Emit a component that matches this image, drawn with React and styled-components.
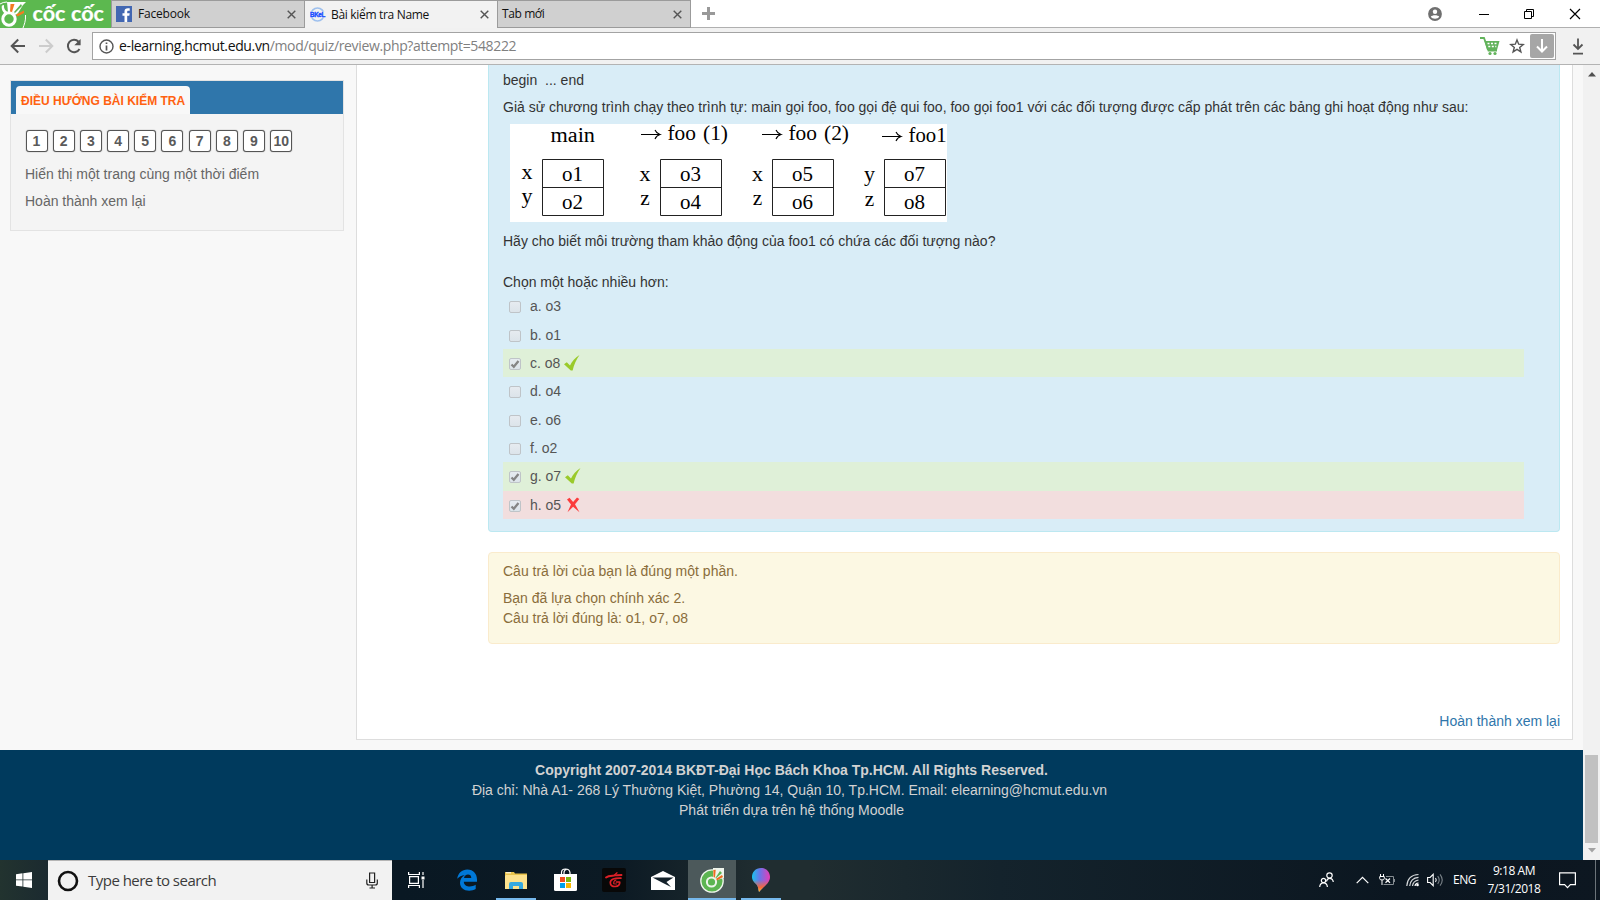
import React from "react";
import styled, { createGlobalStyle } from "styled-components";

const GlobalStyle = createGlobalStyle`
  * { box-sizing: border-box; }
  body { margin: 0; overflow: hidden; font-family: "Liberation Sans", Arial, sans-serif; }
  svg { display: block; flex: none; }
`;

const uiFont = `"Open Sans", "Noto Sans", sans-serif`;

const Screen = styled.div`
  width: 1600px; height: 900px; display: flex; flex-direction: column; overflow: hidden; background: #f8f8f8;
`;

/* ---------- browser chrome ---------- */
const TabStrip = styled.div`
  height: 28px; flex: none; display: flex; background: #fff; border-bottom: 1px solid #b0b0b0;
`;
const Brand = styled.div`
  width: 111px; height: 28px; background: #5cb84f; flex: none; overflow: hidden;
`;
const Tab = styled.div`
  width: ${(p) => p.$w}px; height: 28px; flex: none; display: flex; align-items: center;
  padding: 0 8px 0 ${(p) => p.$pad}px;
  background: ${(p) => (p.$active ? "#f2f2f2" : "#d0d0d0")};
  border: solid #9b9b9b; border-width: 1px 0 ${(p) => (p.$active ? 0 : 1)}px 1px;
  &:nth-child(4) { border-right-width: 1px; }
  font: 12px/16px ${uiFont}; color: #111; letter-spacing: ${(p) => p.$ls}px;
`;
const TabTitle = styled.span`
  flex: 1; white-space: nowrap; margin-left: ${(p) => p.$gap}px;
`;
const NewTab = styled.div`
  width: 34px; display: flex; align-items: center; justify-content: center;
`;
const WindowButtons = styled.div`
  margin-left: auto; display: flex; align-items: center; height: 27px; gap: 25px; padding-right: 19px;
  svg:first-child { margin-right: 4px; }
`;
const Toolbar = styled.div`
  height: 37px; flex: none; display: flex; align-items: center; background: #f1f1f1;
  border-bottom: 1px solid #b3b3b3; padding: 0 11px 0 10px;
`;
const NavButtons = styled.div`
  width: 82px; display: flex; align-items: center; gap: 12px;
`;
const AddressBar = styled.div`
  width: 1464px; height: 28px; background: #fff; border: 1px solid #a3a3a3; display: flex; align-items: center;
  padding: 0 1px 0 6px; font: 14px/20px ${uiFont}; letter-spacing: -0.36px; color: #111;
`;
const Url = styled.span`
  flex: 1; margin-left: 5px; white-space: nowrap; color: #808080;
  b { font-weight: 400; color: #111; }
`;
const DownloadBadge = styled.div`
  width: 24px; height: 24px; border-radius: 2px; background: #a6a6a6; display: flex; align-items: center; justify-content: center;
  margin-left: 5px;
`;
const DownloadButton = styled.div`
  margin-left: 14px;
`;

/* ---------- page ---------- */
const Viewport = styled.div`
  flex: 1; min-height: 0; display: flex;
`;
const Page = styled.div`
  width: 1583px; display: flex; flex-direction: column;
`;
const Columns = styled.div`
  height: 685px; display: flex; align-items: flex-start; padding-left: 10px; gap: 12px;
`;
const NavBlock = styled.aside`
  width: 334px; height: 151px; margin-top: 15px; border: 1px solid #e3e3e3; background: #f4f4f4;
`;
const NavHeader = styled.div`
  height: 33px; background: #2f76ab; padding: 5px 0 0 5px;
`;
const NavTitle = styled.div`
  width: 174px; height: 28px; background: #f8f8f8; border-radius: 4px 4px 0 0; padding-left: 5px;
  font-size: 12px; font-weight: 700; line-height: 31px; color: #ff6210; white-space: nowrap;
`;
const NavBody = styled.div`
  padding: 16px 14px 0;
`;
const QuestionNumbers = styled.div`
  display: flex; gap: 5.2px; margin: 0 0 12px 0.5px;
`;
const QuestionNumber = styled.div`
  width: 22px; height: 22px; border: 1px solid #555; border-radius: 3px; background: #fff;
  box-shadow: 0 0 1px #555; font: 700 14px/20px "Liberation Sans", Arial, sans-serif; text-align: center; color: #5a5a5a;
`;
const NavLink = styled.div`
  font-size: 14px; line-height: 20px; margin-bottom: 7px; color: #666;
`;
const Main = styled.main`
  width: 1217px; height: 675px; background: #fff; border: 1px solid #ddd; border-top: 0; padding: 0 12px 0 131px;
`;
const Question = styled.section`
  height: 467px; background: #d9edf7; border: 1px solid #bce8f1; border-top: 0; border-radius: 0 0 4px 4px;
  padding: 5px 35px 0 14px; margin-bottom: 20px;
  font-size: 14px; line-height: 20px; color: #333;
`;
const Paragraph = styled.p`
  margin: 0 0 ${(p) => p.$after}px; white-space: pre;
`;
const Figure = styled.div`
  width: 437px; height: 98px; margin: 0 0 9px 7px; background: #fff;
`;
const optionColors = { correct: "#dff0d8", wrong: "#f2dede" };
const Option = styled.div`
  width: 1021px; height: 28.33px; padding: 0 0 0.6px 6px; display: flex; align-items: center;
  background: ${(p) => optionColors[p.$state] || "transparent"}; color: #555;
`;
const Checkbox = styled.span`
  width: 12px; height: 12px; border: 1px solid #bfc4c8; border-radius: 2px; margin: 2px 9px 0 0;
  background: linear-gradient(#e6ebf0, #dce4ea);
`;
const Mark = styled.span`
  margin-left: 4px;
`;
const Feedback = styled.section`
  height: 92px; background: #fcf8e3; border: 1px solid #faebcc; border-radius: 4px; padding: 8px 14px;
  font-size: 14px; line-height: 20px; color: #8a6d3b;
`;
const FinishLink = styled.div`
  margin-top: 67px; text-align: right; font-size: 14px; line-height: 20px; color: #2f76ab;
`;
const Footer = styled.footer`
  height: 110px; background: #003a5d; color: #d2d2d2; text-align: center; font-size: 14px; line-height: 20px; padding-top: 10px;
`;
const FooterLine = styled.div`
  padding-right: ${(p) => p.$trail || 0}px;
`;
const Scrollbar = styled.div`
  width: 17px; background: #f1f1f1; display: flex; flex-direction: column; align-items: center; padding: 7px 0 7px;
`;
const Thumb = styled.div`
  width: 13px; height: 88px; background: #c1c1c1; margin: auto 0 5px;
`;

/* ---------- taskbar ---------- */
const Taskbar = styled.div`
  height: 40px; flex: none; display: flex; align-items: stretch; color: #fff;
  background: linear-gradient(90deg, #22332f 0, #1b2a30 48px, #091823 400px, #0c1a24 620px, #202d30 760px, #202d30 810px, #14232c 1000px, #0b1620 1400px, #0d1721 1600px);
`;
const TaskButton = styled.div`
  width: 48px; height: 40px; flex: none; display: flex; align-items: center; justify-content: center;
  margin-right: ${(p) => p.$after ?? 1}px;
  background-color: ${(p) => (p.$current ? "#4c595b" : "transparent")};
  background-image: ${(p) => (p.$line ? "linear-gradient(#76b9ed, #76b9ed)" : "none")};
  background-repeat: no-repeat; background-position: ${(p) => (p.$line === 48 ? 0 : 4)}px 38px;
  background-size: ${(p) => p.$line || 0}px 2px;
`;
const SearchBox = styled.div`
  width: 344px; background: #f2f2f2; border-top: 1px solid #b5b5b5; display: flex; align-items: center; padding: 0 14px 0 9px;
  font: 15px/20px ${uiFont}; letter-spacing: -0.52px; color: #3b3b3b;
`;
const SearchText = styled.span`
  flex: 1; margin-left: 9px; padding-bottom: 1px;
`;
const Tray = styled.div`
  margin-left: auto; width: 281px; display: flex; align-items: center; font: 12px/18px ${uiFont};
`;
const Language = styled.span`
  margin-left: 10px; width: 33px; letter-spacing: -0.5px;
`;
const Clock = styled.div`
  width: 56px; text-align: center; letter-spacing: -0.45px; white-space: nowrap;
`;
const TrayIcon = styled.div`
  margin-left: ${(p) => p.$before}px;
`;
const ShowDesktop = styled.div`
  margin-left: auto; width: 5px; height: 40px; border-left: 1px solid #6b7379;
`;

/* ---------- drawings ---------- */
const CloseX = () => (
  <svg width="9" height="9" viewBox="0 0 9 9"><path d="M.7.7l7.6 7.6M8.3.7L.7 8.3" stroke="#555" strokeWidth="1.4" /></svg>
);

const BrandArt = () => (
  <svg width="111" height="28" viewBox="0 0 111 28">
    <path d="M0 4Q3 2 7 2M25.500 15C26 21 24 25 23 28" fill="none" stroke="#fff" strokeWidth="1" />
    <circle cx="9" cy="19" r="6.200" fill="none" stroke="#fff" strokeWidth="3" />
    <path d="M2 5.500C1 8 2.500 12 5 13.500L8 12.500C5 11 3.500 8 4 5z" fill="#fff" />
    <path d="M7 2H26L23 5 18 13 16 15 12 12 8 12z" fill="#fff" />
    <path d="M10.500 4L10 11.500 12 12 14.500 4z" fill="#f47b20" />
    <path d="M21 4L14 12 15 13 22 6z" fill="#5cb84f" />
    <path d="M16 14.500L24 10.500V13L17.500 16.500z" fill="#f47b20" />
    <g fill="#fff" fontFamily="Lato, sans-serif" fontWeight="700" fontSize="21" stroke="#fff" strokeWidth=".2">
      <text x="32.500" y="20.500" textLength="33" lengthAdjust="spacingAndGlyphs">cốc</text>
      <text x="71" y="20.500" textLength="33" lengthAdjust="spacingAndGlyphs">cốc</text>
    </g>
  </svg>
);

const FacebookIcon = () => (
  <svg width="16" height="16" viewBox="0 0 16 16"><rect width="16" height="16" fill="#4267b2" /><path d="M8.500 16V9.700H6.500V7.200h2V5.600C8.500 3.400 9.700 2.300 12 2.300h1.700v2.400h-1.400c-.9 0-1.100.4-1.100 1.200v1.300h2.500l-.4 2.500h-2.100V16z" fill="#fff" /></svg>
);

const BkelIcon = () => (
  <svg width="16" height="16" viewBox="0 0 16 16">
    <circle cx="7.500" cy="7.500" r="6.500" fill="none" stroke="#9ec0ee" strokeWidth="1.600" />
    <rect y="4.500" width="16" height="6" fill="#f2f2f2" />
    <text x="0" y="9.800" fontFamily="Liberation Sans" fontSize="6.500" fontWeight="700" fill="#1b4fff" stroke="#1b4fff" strokeWidth=".4" textLength="15" lengthAdjust="spacingAndGlyphs">BKeL</text>
  </svg>
);

const NavArrow = ({ color, flip }) => (
  <svg width="16" height="16" viewBox="0 0 16 16"><path transform={flip ? "translate(16 0) scale(-1 1)" : undefined} d="M15 8H2M8.200 1.500L1.700 8l6.500 6.500" fill="none" stroke={color} strokeWidth="2" /></svg>
);

const ReloadIcon = () => (
  <svg width="16" height="16" viewBox="0 0 16 16"><path d="M13.500 11A6.200 6.200 0 1 1 12.600 3.700" fill="none" stroke="#555" strokeWidth="2" /><path d="M14.600 1v6.300H8.300z" fill="#555" /></svg>
);

const InfoIcon = () => (
  <svg width="15" height="15" viewBox="0 0 15 15"><circle cx="7.500" cy="7.500" r="6.500" fill="none" stroke="#555" strokeWidth="1.400" /><path d="M7.500 6.500v5M7.500 3.400v1.700" stroke="#555" strokeWidth="1.700" /></svg>
);

const CartIcon = () => (
  <svg width="20" height="19" viewBox="0 0 20 19"><path d="M0 1h4l4.500 12.500H17" fill="none" stroke="#62b35b" strokeWidth="1.800" /><path d="M4.500 4H19.500L17 13H7z" fill="#62b35b" /><path d="M7.500 6.500h9.500M8.300 9.500h8" stroke="#fff" strokeWidth="1.500" strokeDasharray="2 1.500" /><circle cx="10" cy="16.500" r="1.600" fill="#62b35b" /><circle cx="15" cy="16.500" r="1.600" fill="#62b35b" /></svg>
);

const StarIcon = () => (
  <svg width="16" height="16" viewBox="0 0 16 16"><path d="M8 1.900l1.700 4.300 4.500.3-3.500 2.900 1.200 4.500L8 11.400l-3.900 2.500 1.200-4.500-3.500-2.900 4.500-.3z" fill="none" stroke="#555" strokeWidth="1.400" /></svg>
);

const WinIcons = () => (
  <>
    <svg width="14" height="14" viewBox="0 0 14 14"><circle cx="7" cy="7" r="6.900" fill="#6f6f6f" /><circle cx="7" cy="4.800" r="2.200" fill="#fff" /><path d="M2.800 9.800C4 7.800 10 7.800 11.200 9.800 10 12.400 4 12.400 2.800 9.800z" fill="#fff" /></svg>
    <svg width="24" height="12" viewBox="0 0 24 12"><path d="M8 6.500h10" stroke="#000" /></svg>
    <svg width="24" height="12" viewBox="0 0 24 12"><path d="M4.500 3.500h7v7h-7zM6.500 3.500v-2h7v7h-2" fill="none" stroke="#000" /></svg>
    <svg width="12" height="12" viewBox="0 0 12 12"><path d="M1 1l10 10M11 1L1 11" stroke="#000" strokeWidth="1.200" /></svg>
  </>
);

const figureColumns = [
  { box: 32.5, lx: 11.5, labels: [["x", 55], ["y", 79]], cells: ["o1", "o2"] },
  { box: 150.5, lx: 129.5, labels: [["x", 57], ["z", 80.5]], cells: ["o3", "o4"] },
  { box: 262.5, lx: 242, labels: [["x", 57], ["z", 80.5]], cells: ["o5", "o6"] },
  { box: 374.5, lx: 354, labels: [["y", 57], ["z", 82]], cells: ["o7", "o8"] },
];
const figureCalls = [
  { arrow: 131, y: 16, name: "foo", arg: "(1)" },
  { arrow: 252, y: 16, name: "foo", arg: "(2)" },
];
const FigureArrow = ({ x, y }) => (
  <path d={`M${x} ${y}h18M${x + 14} ${y - 4.5}q1.500 3.500 5 4.500q-3.500 1-5 4.500`} fill="none" stroke="#000" strokeWidth="1.100" />
);
const ActivationRecords = () => (
  <svg width="437" height="98" viewBox="0 0 437 98" fontFamily="Liberation Serif" fontSize="20" fill="#000">
    <text x="40.500" y="18.300" textLength="44.500" lengthAdjust="spacingAndGlyphs">main</text>
    {figureCalls.map((c) => (
      <g key={c.arg}>
        <FigureArrow x={c.arrow} y={10.5} />
        <text x={c.arrow + 26.5} y={c.y} textLength="28.500" lengthAdjust="spacingAndGlyphs">{c.name}</text>
        <text x={c.arrow + 62} y={c.y} textLength="25" lengthAdjust="spacingAndGlyphs">{c.arg}</text>
      </g>
    ))}
    <FigureArrow x={372} y={12.5} />
    <text x="398.500" y="18.300" textLength="38" lengthAdjust="spacingAndGlyphs">foo1</text>
    {figureColumns.map((c) => (
      <g key={c.box}>
        <path d={`M${c.box} 35.500h61v56h-61zM${c.box} 63.500h61`} fill="none" stroke="#222" />
        {c.labels.map(([t, y]) => <text key={t} x={t === "z" ? c.lx + 0.8 : c.lx} y={y} textLength={t === "z" ? 9.5 : 11} lengthAdjust="spacingAndGlyphs">{t}</text>)}
        {c.cells.map((t, i) => <text key={t} x={c.box + 19.5} y={57.3 + i * 28} textLength="21" lengthAdjust="spacingAndGlyphs">{t}</text>)}
      </g>
    ))}
  </svg>
);

const CheckGlyph = () => (
  <svg width="10" height="10" viewBox="0 0 10 10"><path d="M1.500 5.500l2.300 2.300L8.500 2" fill="none" stroke="#858585" strokeWidth="2.300" /></svg>
);
const TickMark = () => (
  <svg width="16" height="16" viewBox="0 0 16 16"><path d="M0 9.300L2.800 7.300 6 10.600C8 6.500 11 2.800 15.500 0 12.300 4.500 10 9.500 8.600 15.500H6.800z" fill="#9aca2a" /></svg>
);
const CrossMark = () => (
  <svg width="16" height="16" viewBox="0 0 16 16"><path d="M2 2.500L4.500.8 8.100 5 12 .6 14.300 2 10 7.300 14.500 15.200 8.100 9.800 2.500 15.200 6 7.600z" fill="#fb3b3b" /></svg>
);

const Arrow = ({ down }) => (
  <svg width="8" height="5" viewBox="0 0 8 5"><path d={down ? "M0 0h8L4 4.500z" : "M0 4.500h8L4 0z"} fill={down ? "#a3a3a3" : "#505050"} /></svg>
);

const WindowsLogo = () => (
  <svg width="16" height="16" viewBox="0 0 16 16" fill="#fff"><path d="M0 2.200L6.500 1.300V7.500H0zM7.300 1.200L16 0V7.500H7.300zM0 8.300H6.500V14.600L0 13.700zM7.300 8.300H16V16L7.300 14.700z" /></svg>
);
const MicIcon = () => (
  <svg width="12" height="17" viewBox="0 0 12 17" fill="none" stroke="#222" strokeWidth="1.200"><path d="M3.600 1h5v9.500h-5zM.8 7.500V11q0 2 2 2h6.500q2 0 2-2V7.500M6.100 13v3M3.500 16h5.500" /></svg>
);
const TaskViewIcon = () => (
  <svg width="17" height="16" viewBox="0 0 17 16" fill="none" stroke="#fff" strokeWidth="1.200"><path d="M.6 0v2.500h10.800V0M.6 16v-2.500h10.800V16M1.600 4.600h8.800v6.800H1.600zM15 0v3M15 8v8" /><path d="M13.500 4.500h3v3h-3z" fill="#fff" stroke="none" /></svg>
);
const EdgeIcon = () => (
  <svg width="20" height="22" viewBox="0 0 20 22"><path d="M.2 9.800C1 4 5 .5 10.300.5 16.500.5 20 5 20 10.500v2.200H6.800c.2 3.300 3 4.800 6 4.800 2.200 0 4.100-.6 5.900-1.700v4.300c-1.900 1.100-4.200 1.600-6.500 1.600C6.800 21.700 3 18.500 3 13.700c0-3.300 1.800-6 4.800-7.500C4.600 6.400 2 7.800.2 9.800zM7 8.900h7.300C14.300 6.700 13 5.500 11 5.500S7.400 6.900 7 8.900z" fill="#0078d7" /></svg>
);
const ExplorerIcon = () => (
  <svg width="22" height="19" viewBox="0 0 22 19"><path d="M0 1h9l1 1.500h12V18H0z" fill="#e9c44c" /><path d="M1 4H22V18H0V5z" fill="#fde28d" /><path d="M1 1.800h5" stroke="#fff" /><path d="M4 18v-5q0-2 2-2h10q2 0 2 2v5h-4v-3H8v3z" fill="#35a9e0" /></svg>
);
const StoreIcon = () => (
  <svg width="23" height="24" viewBox="0 0 23 24"><path d="M7.500 7V4.500Q7.500 1 11.500 1t4.500 3.500V7M10 7V4.500Q10 2 12.500 1.500" fill="none" stroke="#fff" strokeWidth="1.200" /><path d="M0 6H23V21.500Q23 23 21.500 23H1.500Q0 23 0 21.500z" fill="#fff" /><path d="M6 9h5v5H6z" fill="#f04e1f" /><path d="M12 9h5v5h-5z" fill="#7cb910" /><path d="M6 15h5v5H6z" fill="#00a0ec" /><path d="M12 15h5v5h-5z" fill="#fbb800" /></svg>
);
const GarenaIcon = () => (
  <svg width="24" height="24" viewBox="0 0 24 24"><rect width="24" height="24" rx="2" fill="#080808" /><g fill="none" stroke="#dd2027" strokeLinecap="round" strokeLinejoin="round"><path d="M4 9.500C7 7 11 8.200 15 7.200L19.500 7" strokeWidth="1.900" /><path d="M12.500 7L15 4.700" strokeWidth="1.200" /><path d="M19 10.200C12.500 10 8.300 11 8.300 14.700 8.300 17.500 10.500 18.700 13.300 18.500 16.500 18.200 18 16.500 17.700 14H14.500" strokeWidth="1.700" /><path d="M14 12C12 12.500 11.500 13.700 11.700 15.700L14.500 16" strokeWidth="1.100" /></g></svg>
);
const MailIcon = () => (
  <svg width="24" height="19" viewBox="0 0 24 19"><path d="M0 6L12 0 24 6V19H0z" fill="#fff" /><path d="M1.500 6.500H22.500L15.500 11 20 16 11 11.500z" fill="#13212a" /></svg>
);
const CocCocIcon = () => (
  <svg width="25" height="25" viewBox="0 0 25 25"><circle cx="12" cy="13" r="11.200" fill="#5cb551" stroke="#eef5ec" strokeWidth="1.300" /><path d="M13 0H24V10L13 13z" fill="#eef5ec" /><path d="M20 3L14 12 22 5z" fill="#5cb551" /><path d="M13.300 2l2.400-.3L15 9.500l-1.500 1zM22 7l1 2-7 4-1-1.500z" fill="#ef6c21" /><circle cx="11.500" cy="14" r="4.600" fill="#5cb551" stroke="#eef5ec" strokeWidth="2" /></svg>
);
const dropPath = "M9 0C14.500 0 18 4 18 9 18 15 12 18 7 24 6 21 6.500 19 4.500 16.500 2.500 14.500 0 12.500 0 9 0 4 3.500 0 9 0z";
const PaintIcon = () => (
  <svg width="18" height="24" viewBox="0 0 18 24">
    <defs>
      <linearGradient id="dropSides"><stop offset="0" stopColor="#19c3ec" /><stop offset=".45" stopColor="#6d72e8" /><stop offset="1" stopColor="#e73cb5" /></linearGradient>
      <linearGradient id="dropTip" x1="0" y1="0" x2="0" y2="1"><stop offset=".5" stopColor="#f36a4c" stopOpacity="0" /><stop offset=".8" stopColor="#f3673d" /><stop offset="1" stopColor="#fcc521" /></linearGradient>
    </defs>
    <path d={dropPath} fill="url(#dropSides)" />
    <path d={dropPath} fill="url(#dropTip)" />
  </svg>
);
const PeopleIcon = () => (
  <svg width="15" height="16" viewBox="0 0 15 16" fill="none" stroke="#fff" strokeWidth="1.200"><circle cx="10.500" cy="3.500" r="2.700" /><path d="M7.500 9.500C8 7 9 6.300 10.500 6.300S14 7.500 14.300 10" /><circle cx="4.500" cy="8.500" r="2.200" /><path d="M.7 15c.2-3 1.700-4.200 3.800-4.200S8.200 12 8.400 15" /></svg>
);
const ChevronIcon = () => (
  <svg width="13" height="8" viewBox="0 0 13 8"><path d="M.7 7.200L6.500 1.300l5.800 5.900" fill="none" stroke="#fff" strokeWidth="1.200" /></svg>
);
const BatteryIcon = () => (
  <svg width="16" height="12" viewBox="0 0 16 12" fill="none" stroke="#fff"><path d="M1.500 0v2M4.500 0v2M.5 2.500h5M.7 3v1.500q0 1.500 2.300 1.500t2.300-1.500V3M3 6v5" /><path d="M7 2.500h7.500v8H4.500M15.500 5v3" stroke="#858c91" /><path d="M6.500 4.500l4.500 4.300M11 4.500L6.500 8.800" strokeWidth="1.200" /></svg>
);
const WifiIcon = () => (
  <svg width="13" height="14" viewBox="0 0 13 14" fill="none" strokeWidth="1.200"><path d="M.8 13Q1.500 2 12.500 1.500M3.700 13Q4.500 5 12.500 4.300M6.500 13Q7 8 12.500 7" stroke="#d5d8da" /><path d="M9 13q.3-3 3.500-3" stroke="#fff" /><circle cx="11.500" cy="12" r="1.300" fill="#fff" /></svg>
);
const SpeakerIcon = () => (
  <svg width="16" height="14" viewBox="0 0 16 14" fill="none" strokeWidth="1.100"><path d="M.6 4.500h2.500L6.200 1.300v11.400L3.100 9.500H.6z" stroke="#fff" /><path d="M8.500 5q1.500 2 0 4" stroke="#fff" /><path d="M10.700 3.200q3 3.800 0 7.600M13 1.300q4.500 5.700 0 11.400" stroke="#7a8288" /></svg>
);
const NoteIcon = () => (
  <svg width="17" height="17" viewBox="0 0 17 17"><path d="M.6.900h15.800v11.700h-5L8.500 15.600l-2.900-3H.6z" fill="none" stroke="#fff" strokeWidth="1.200" /></svg>
);

const options = [
  ["a. o3"], ["b. o1"], ["c. o8", "correct"], ["d. o4"], ["e. o6"], ["f. o2"], ["g. o7", "correct"], ["h. o5", "wrong"],
];

export default function App() {
  return (
    <Screen>
      <GlobalStyle />
      <TabStrip>
        <Brand><BrandArt /></Brand>
        <Tab $w={193} $pad={4} $ls={-0.2}><FacebookIcon /><TabTitle $gap={6}>Facebook</TabTitle><CloseX /></Tab>
        <Tab $w={193} $pad={5} $ls={-0.32} $active><BkelIcon /><TabTitle $gap={5}>Bài kiểm tra Name</TabTitle><CloseX /></Tab>
        <Tab $w={194} $pad={4} $ls={-0.4}><TabTitle $gap={0}>Tab mới</TabTitle><CloseX /></Tab>
        <NewTab><svg width="13" height="13" viewBox="0 0 13 13"><path d="M6.500 0v13M0 6.500h13" stroke="#999" strokeWidth="3" /></svg></NewTab>
        <WindowButtons><WinIcons /></WindowButtons>
      </TabStrip>
      <Toolbar>
        <NavButtons><NavArrow color="#555" /><NavArrow color="#ccc" flip /><ReloadIcon /></NavButtons>
        <AddressBar>
          <InfoIcon />
          <Url><b>e-learning.hcmut.edu.vn</b>/mod/quiz/review.php?attempt=548222</Url>
          <CartIcon />
          <TrayIcon $before={9}><StarIcon /></TrayIcon>
          <DownloadBadge><svg width="12" height="14" viewBox="0 0 12 14"><path d="M6 0v12M1 7.500l5 5 5-5" fill="none" stroke="#fff" strokeWidth="2" /></svg></DownloadBadge>
        </AddressBar>
        <DownloadButton>
          <svg width="16" height="17" viewBox="0 0 16 17"><path d="M8 .5v10M3.500 6.500L8 11l4.500-4.500M3 15.700h10" fill="none" stroke="#555" strokeWidth="1.800" /></svg>
        </DownloadButton>
      </Toolbar>
      <Viewport>
        <Page>
          <Columns>
            <NavBlock>
              <NavHeader><NavTitle>ĐIỀU HƯỚNG BÀI KIỂM TRA</NavTitle></NavHeader>
              <NavBody>
                <QuestionNumbers>
                  {Array.from({ length: 10 }, (_, i) => <QuestionNumber key={i}>{i + 1}</QuestionNumber>)}
                </QuestionNumbers>
                <NavLink>Hiển thị một trang cùng một thời điểm</NavLink>
                <NavLink>Hoàn thành xem lại</NavLink>
              </NavBody>
            </NavBlock>
            <Main>
              <Question>
                <Paragraph $after={7}>{"begin  ... end"}</Paragraph>
                <Paragraph $after={7}>Giả sử chương trình chạy theo trình tự: main gọi foo, foo gọi đệ qui foo, foo gọi foo1 với các đối tượng được cấp phát trên các bảng ghi hoạt động như sau:</Paragraph>
                <Figure><ActivationRecords /></Figure>
                <Paragraph $after={21}>Hãy cho biết môi trường tham khảo động của foo1 có chứa các đối tượng nào?</Paragraph>
                <Paragraph $after={0.4}>Chọn một hoặc nhiều hơn:</Paragraph>
                {options.map(([text, state]) => (
                  <Option key={text} $state={state}>
                    <Checkbox>{state && <CheckGlyph />}</Checkbox>
                    {text}
                    {state && <Mark>{state === "correct" ? <TickMark /> : <CrossMark />}</Mark>}
                  </Option>
                ))}
              </Question>
              <Feedback>
                <Paragraph $after={7}>Câu trả lời của bạn là đúng một phần.</Paragraph>
                <Paragraph $after={0}>Bạn đã lựa chọn chính xác 2.</Paragraph>
                <Paragraph $after={0}>Câu trả lời đúng là: o1, o7, o8</Paragraph>
              </Feedback>
              <FinishLink>Hoàn thành xem lại</FinishLink>
            </Main>
          </Columns>
          <Footer>
            <FooterLine><b>Copyright 2007-2014 BKĐT-Đại Học Bách Khoa Tp.HCM. All Rights Reserved.</b></FooterLine>
            <FooterLine $trail={4}>Địa chỉ: Nhà A1- 268 Lý Thường Kiệt, Phường 14, Quận 10, Tp.HCM. Email: elearning@hcmut.edu.vn</FooterLine>
            <FooterLine>Phát triển dựa trên hệ thống Moodle</FooterLine>
          </Footer>
        </Page>
        <Scrollbar><Arrow /><Thumb /><Arrow down /></Scrollbar>
      </Viewport>
      <Taskbar>
        <TaskButton $after={0}><WindowsLogo /></TaskButton>
        <SearchBox>
          <svg width="22" height="22" viewBox="0 0 22 22"><circle cx="11" cy="11" r="9" fill="none" stroke="#111" strokeWidth="2.600" /></svg>
          <SearchText>Type here to search</SearchText>
          <MicIcon />
        </SearchBox>
        <TaskButton $after={3}><TaskViewIcon /></TaskButton>
        <TaskButton><EdgeIcon /></TaskButton>
        <TaskButton $line={40}><ExplorerIcon /></TaskButton>
        <TaskButton><StoreIcon /></TaskButton>
        <TaskButton><GarenaIcon /></TaskButton>
        <TaskButton><MailIcon /></TaskButton>
        <TaskButton $current $line={48}><CocCocIcon /></TaskButton>
        <TaskButton $line={40}><PaintIcon /></TaskButton>
        <Tray>
          <TrayIcon $before={0}><PeopleIcon /></TrayIcon>
          <TrayIcon $before={22}><ChevronIcon /></TrayIcon>
          <TrayIcon $before={10}><BatteryIcon /></TrayIcon>
          <TrayIcon $before={11}><WifiIcon /></TrayIcon>
          <TrayIcon $before={8}><SpeakerIcon /></TrayIcon>
          <Language>ENG</Language>
          <Clock>9:18 AM<br />7/31/2018</Clock>
          <TrayIcon $before={17}><NoteIcon /></TrayIcon>
          <ShowDesktop />
        </Tray>
      </Taskbar>
    </Screen>
  );
}
